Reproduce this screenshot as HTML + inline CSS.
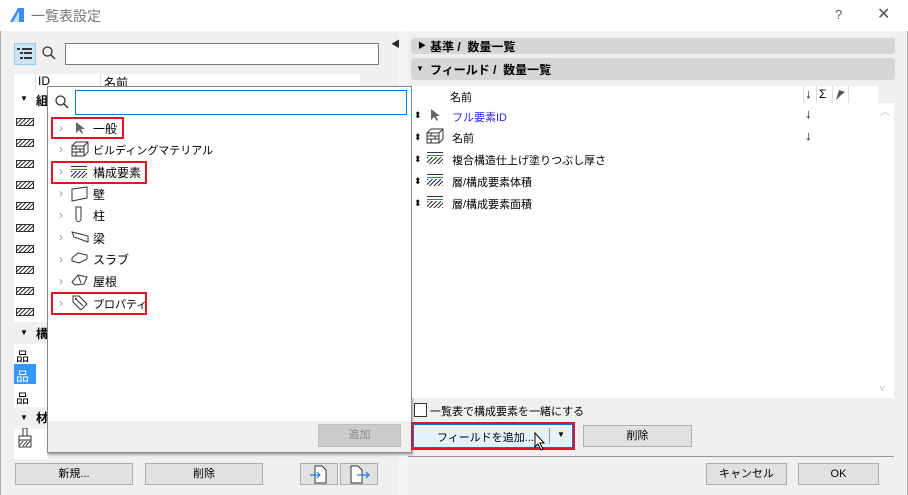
<!DOCTYPE html>
<html><head><meta charset="utf-8"><style>
*{box-sizing:border-box;margin:0;padding:0}
body{width:908px;height:495px;overflow:hidden;background:#f0f0f0;font-family:"Liberation Sans","Noto Sans CJK JP",sans-serif;font-size:11px;color:#000;position:relative}
.a{position:absolute}
.btn{position:absolute;background:#e1e1e1;border:1px solid #adadad;text-align:center;font-size:11px}
.hatch{position:absolute;width:18px;height:8px;border:1px solid #333;background:repeating-linear-gradient(-45deg,#333 0 1px,#fff 1px 3px)}
.red{position:absolute;border:2px solid #e81123}
.chev{position:absolute;color:#999;font-size:12px}
.lay{position:absolute;width:16px;height:12px;border-top:1px solid #333;background:linear-gradient(#fff 0 2px,#3a6fd8 2px 3px,#fff 3px 4px,transparent 4px),repeating-linear-gradient(-45deg,#333 0 1px,#fff 1px 3px)}
</style></head><body>
<div class="a" style="left:0;top:0;width:908px;height:31px;background:#fff"></div>
<svg class="a" style="left:9px;top:7px" width="16" height="16"><path d="M1 15 L9 1 L15 1 L15 15Z" fill="#3b8de8"/><path d="M4 15 L10 4 L10 15Z" fill="#bfe0ff"/></svg>
<div class="a" style="left:31px;top:6px;font-size:14px;color:#777">一覧表設定</div>
<div class="a" style="left:835px;top:7px;font-size:13px;color:#555">?</div>
<div class="a" style="left:877px;top:4px;font-size:16px;color:#555">✕</div>
<div class="a" style="left:0;top:31px;width:1px;height:464px;background:#aaa"></div>
<div class="a" style="left:907px;top:31px;width:1px;height:464px;background:#aaa"></div>
<div class="a" style="left:398px;top:31px;width:10px;height:464px;background:#f5f5f5"></div>
<div class="a" style="left:391px;top:37px;font-size:9px;color:#222">◀</div>

<div class="a" style="left:14px;top:43px;width:22px;height:22px;background:#cce4f7;border:1px solid #99c9ef"></div>
<svg class="a" style="left:17px;top:47px" width="16" height="14"><rect x="0" y="1" width="3" height="2" fill="#333"/><rect x="5" y="1" width="10" height="2" fill="#333"/><rect x="3" y="5" width="3" height="2" fill="#333"/><rect x="7" y="5" width="8" height="2" fill="#333"/><rect x="3" y="10" width="3" height="2" fill="#333"/><rect x="7" y="10" width="8" height="2" fill="#333"/></svg>
<svg class="a" style="left:41px;top:45px" width="16" height="16"><circle cx="6.5" cy="6.5" r="4.5" fill="none" stroke="#333" stroke-width="1.3"/><line x1="10" y1="10" x2="14" y2="14" stroke="#333" stroke-width="1.5"/></svg>
<div class="a" style="left:65px;top:43px;width:314px;height:22px;background:#fff;border:1px solid #7a7a7a"></div>
<div class="a" style="left:14px;top:74px;width:346px;height:15px;background:#fff"></div>
<div class="a" style="left:35px;top:74px;width:1px;height:15px;background:#ddd"></div>
<div class="a" style="left:100px;top:74px;width:1px;height:15px;background:#ddd"></div>
<div class="a" style="left:38px;top:74px;font-size:12px">ID</div>
<div class="a" style="left:104px;top:74px;font-size:12px">名前</div>
<div class="a" style="left:14px;top:89px;width:34px;height:370px;background:#fff"></div>
<div class="a" style="left:20px;top:94px;font-size:8px">▼</div><div class="a" style="left:36px;top:92px;font-weight:bold;font-size:12px">組</div>
<div class="hatch" style="left:16px;top:118px"></div>
<div class="hatch" style="left:16px;top:139px"></div>
<div class="hatch" style="left:16px;top:160px"></div>
<div class="hatch" style="left:16px;top:181px"></div>
<div class="hatch" style="left:16px;top:202px"></div>
<div class="hatch" style="left:16px;top:224px"></div>
<div class="hatch" style="left:16px;top:245px"></div>
<div class="hatch" style="left:16px;top:266px"></div>
<div class="hatch" style="left:16px;top:287px"></div>
<div class="hatch" style="left:16px;top:308px"></div>
<div class="a" style="left:14px;top:322px;width:34px;height:22px;background:#f0f0f0"></div>
<div class="a" style="left:20px;top:328px;font-size:8px">▼</div><div class="a" style="left:36px;top:325px;font-weight:bold;font-size:12px">構</div>
<div class="a" style="left:16px;top:346px;font-size:13px">品</div>
<div class="a" style="left:14px;top:364px;width:22px;height:20px;background:#3399ff"></div>
<div class="a" style="left:16px;top:366px;font-size:13px;color:#fff">品</div>
<div class="a" style="left:16px;top:388px;font-size:13px">品</div>
<div class="a" style="left:14px;top:407px;width:34px;height:22px;background:#f0f0f0"></div>
<div class="a" style="left:20px;top:413px;font-size:8px">▼</div><div class="a" style="left:36px;top:409px;font-weight:bold;font-size:12px">材</div>
<svg class="a" style="left:16px;top:428px" width="18" height="20"><rect x="7" y="0" width="4" height="8" fill="none" stroke="#333"/><path d="M3 8h12v4H3zM3 12v7h12v-7" fill="none" stroke="#333"/><path d="M4 17l3-4M7 18l4-5M10 18l4-5" stroke="#333"/></svg>

<!-- popup -->
<div class="a" style="left:47px;top:86px;width:365px;height:367px;background:#fff;border:1px solid #888;box-shadow:1px 2px 2px rgba(0,0,0,.3)"></div>
<svg class="a" style="left:54px;top:94px" width="16" height="16"><circle cx="6.5" cy="6.5" r="4.5" fill="none" stroke="#333" stroke-width="1.3"/><line x1="10" y1="10" x2="14" y2="14" stroke="#333" stroke-width="1.5"/></svg>
<div class="a" style="left:75px;top:90px;width:332px;height:25px;border:1px solid #0078d7;background:#fff"></div>
<div class="chev" style="left:59px;top:121px">›</div>
<svg class="a" style="left:74px;top:121px" width="12" height="14"><path d="M2 1 L2 12 L5 9 L8 13 L9 12 L7 8 L11 8Z" fill="#666"/></svg>
<div class="a" style="left:93px;top:120px;font-size:12px">一般</div>
<div class="chev" style="left:59px;top:142px">›</div>
<svg class="a" style="left:71px;top:141px" width="18" height="16"><path d="M1 5h12v10H1zM1 5l4-4h12v10l-4 4M13 5l4-4M1 8h12M1 11h12M5 5v3M9 8v3M5 11v4" fill="none" stroke="#333"/></svg>
<div class="a" style="left:93px;top:142px">ビルディングマテリアル</div>
<div class="chev" style="left:59px;top:164px">›</div>
<div class="lay" style="left:71px;top:166px"></div>
<div class="a" style="left:93px;top:164px;font-size:12px">構成要素</div>
<div class="chev" style="left:59px;top:186px">›</div>
<svg class="a" style="left:71px;top:186px" width="18" height="16"><path d="M1 3 L16 1 L16 12 L1 15Z" fill="none" stroke="#333"/></svg>
<div class="a" style="left:93px;top:186px;font-size:12px">壁</div>
<div class="chev" style="left:59px;top:208px">›</div>
<svg class="a" style="left:74px;top:206px" width="10" height="16"><path d="M2 1h5v12a2.5 2.5 0 0 1-5 0z" fill="none" stroke="#333"/></svg>
<div class="a" style="left:93px;top:207px;font-size:12px">柱</div>
<div class="chev" style="left:59px;top:230px">›</div>
<svg class="a" style="left:71px;top:230px" width="18" height="14"><path d="M1 2 L17 6 L17 12 L3 7Z M1 2 L3 7" fill="none" stroke="#333"/></svg>
<div class="a" style="left:93px;top:230px;font-size:12px">梁</div>
<div class="chev" style="left:59px;top:252px">›</div>
<svg class="a" style="left:71px;top:252px" width="18" height="12"><path d="M1 6 L7 1 L16 3 L16 7 L8 11 L1 9Z" fill="none" stroke="#333"/></svg>
<div class="a" style="left:93px;top:251px;font-size:12px">スラブ</div>
<div class="chev" style="left:59px;top:274px">›</div>
<svg class="a" style="left:71px;top:274px" width="18" height="12"><path d="M1 8 L7 1 L16 3 L13 10 L4 11Z M7 1 L10 9" fill="none" stroke="#333"/></svg>
<div class="a" style="left:93px;top:273px;font-size:12px">屋根</div>
<div class="chev" style="left:59px;top:296px">›</div>
<svg class="a" style="left:71px;top:294px" width="18" height="16"><path d="M2 2h6l8 8-6 6-8-8z M4 4l8 8" fill="none" stroke="#333"/><circle cx="5" cy="5" r="1" fill="#333"/></svg>
<div class="a" style="left:93px;top:296px">プロパティ</div>
<div class="red" style="left:51px;top:117px;width:73px;height:22px"></div>
<div class="red" style="left:51px;top:161px;width:96px;height:23px"></div>
<div class="red" style="left:51px;top:292px;width:96px;height:23px"></div>
<div class="a" style="left:48px;top:421px;width:363px;height:31px;background:#f0f0f0"></div>
<div class="btn" style="left:318px;top:424px;width:83px;height:23px;background:#ccc;border-color:#bfbfbf;color:#888;line-height:21px">追加</div>

<div class="btn" style="left:15px;top:463px;width:118px;height:22px;line-height:20px">新規...</div>
<div class="btn" style="left:145px;top:463px;width:118px;height:22px;line-height:20px">削除</div>
<div class="btn" style="left:300px;top:463px;width:38px;height:22px"></div>
<div class="btn" style="left:340px;top:463px;width:38px;height:22px"></div>
<svg class="a" style="left:309px;top:465px" width="20" height="19"><path d="M6 1h7l4 4v13H6z" fill="#fff" stroke="#333"/><path d="M1 10h10M8 7l3 3-3 3" fill="none" stroke="#1e7be0" stroke-width="1.2"/></svg>
<svg class="a" style="left:349px;top:465px" width="22" height="19"><path d="M2 1h7l4 4v13H2z" fill="#fff" stroke="#333"/><path d="M8 10h12M17 7l3 3-3 3" fill="none" stroke="#1e7be0" stroke-width="1.2"/></svg>

<!-- right -->
<div class="a" style="left:411px;top:38px;width:484px;height:16px;background:#d6d6d6;border-radius:3px"></div>
<div class="a" style="left:418px;top:40px;font-size:8px">▶</div>
<div class="a" style="left:430px;top:38px;font-weight:bold;font-size:12px">基準 /&nbsp; 数量一覧</div>
<div class="a" style="left:411px;top:58px;width:484px;height:22px;background:#d6d6d6;border-radius:3px"></div>
<div class="a" style="left:416px;top:64px;font-size:8px">▼</div>
<div class="a" style="left:430px;top:61px;font-weight:bold;font-size:12px">フィールド /&nbsp; 数量一覧</div>
<div class="a" style="left:411px;top:86px;width:467px;height:312px;background:#fff;border-left:1px solid #888"></div>
<div class="a" style="left:878px;top:103px;width:16px;height:295px;background:#fff"></div>
<div class="a" style="left:880px;top:103px;font-size:10px;color:#bbb">︿</div>
<div class="a" style="left:880px;top:383px;font-size:9px;color:#bbb">v</div>
<div class="a" style="left:450px;top:89px">名前</div>
<div class="a" style="left:803px;top:86px;width:1px;height:17px;background:#ddd"></div>
<div class="a" style="left:816px;top:86px;width:1px;height:17px;background:#ddd"></div>
<div class="a" style="left:832px;top:86px;width:1px;height:17px;background:#ddd"></div>
<div class="a" style="left:848px;top:86px;width:1px;height:17px;background:#ddd"></div>
<div class="a" style="left:805px;top:86px;font-size:13px">↓</div><div class="a" style="left:819px;top:87px;font-size:12px">Σ</div>
<svg class="a" style="left:834px;top:89px" width="12" height="12"><path d="M2 11 L5 1 L11 3 L7 6Z" fill="#555"/></svg>
<div class="a" style="left:414px;top:110px;font-size:9px">⬍</div>
<svg class="a" style="left:429px;top:108px" width="12" height="14"><path d="M2 1 L2 12 L5 9 L8 13 L9 12 L7 8 L11 8Z" fill="#666"/></svg>
<div class="a" style="left:452px;top:109px;color:#2a2ad8">フル要素ID</div>
<div class="a" style="left:805px;top:106px;font-size:13px">↓</div>
<div class="a" style="left:414px;top:132px;font-size:9px">⬍</div>
<svg class="a" style="left:426px;top:128px" width="18" height="16"><path d="M1 5h12v10H1zM1 5l4-4h12v10l-4 4M13 5l4-4M1 8h12M1 11h12M5 5v3M9 8v3M5 11v4" fill="none" stroke="#333"/></svg>
<div class="a" style="left:452px;top:130px">名前</div>
<div class="a" style="left:805px;top:128px;font-size:13px">↓</div>
<div class="a" style="left:414px;top:154px;font-size:9px">⬍</div><div class="lay" style="left:427px;top:152px"></div>
<div class="a" style="left:452px;top:152px">複合構造仕上げ塗りつぶし厚さ</div>
<div class="a" style="left:414px;top:176px;font-size:9px">⬍</div><div class="lay" style="left:427px;top:174px"></div>
<div class="a" style="left:452px;top:174px">層/構成要素体積</div>
<div class="a" style="left:414px;top:198px;font-size:9px">⬍</div><div class="lay" style="left:427px;top:196px"></div>
<div class="a" style="left:452px;top:196px">層/構成要素面積</div>
<div class="a" style="left:414px;top:403px;width:13px;height:14px;border:1px solid #333;background:#fff"></div>
<div class="a" style="left:430px;top:403px">一覧表で構成要素を一緒にする</div>
<div class="red" style="left:411px;top:422px;width:164px;height:28px"></div>
<div class="a" style="left:413px;top:424px;width:160px;height:24px;background:#e5f1fb;border:1px solid #0078d7"></div>
<div class="a" style="left:437px;top:429px">フィールドを追加...</div>
<div class="a" style="left:549px;top:428px;width:1px;height:16px;background:#999"></div>
<div class="a" style="left:557px;top:430px;font-size:8px">▼</div>
<svg class="a" style="left:534px;top:432px" width="12" height="20"><path d="M1 1 L1 15 L4 12 L7 18 L9 17 L6 11 L10 11Z" fill="#fff" stroke="#000"/></svg>
<div class="btn" style="left:583px;top:425px;width:109px;height:22px;line-height:20px">削除</div>
<div class="a" style="left:408px;top:456px;width:486px;height:1px;background:#999"></div>
<div class="btn" style="left:706px;top:463px;width:81px;height:22px;line-height:20px">キャンセル</div>
<div class="btn" style="left:798px;top:463px;width:81px;height:22px;line-height:20px">OK</div>
</body></html>
